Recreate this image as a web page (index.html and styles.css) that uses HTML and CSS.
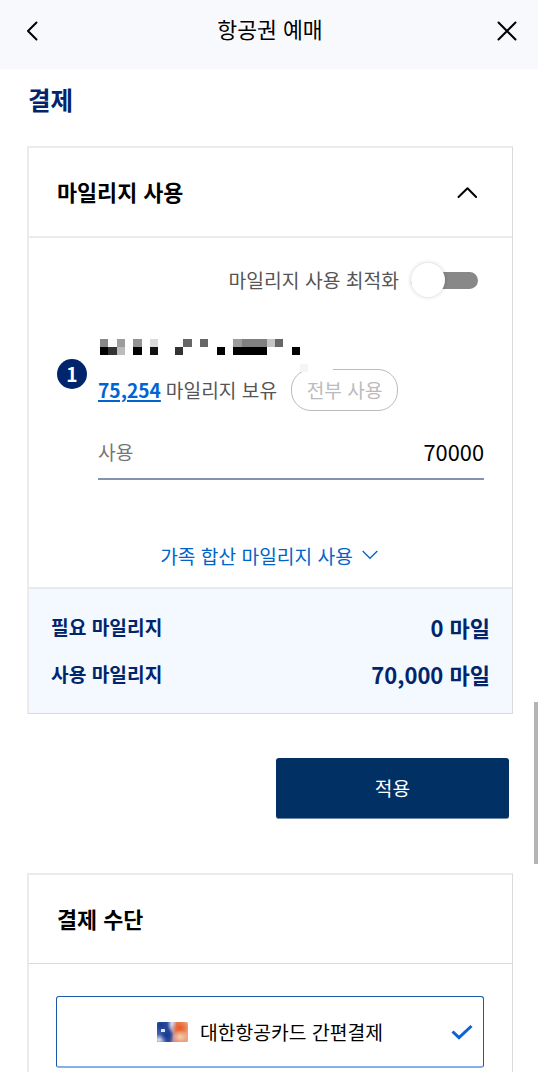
FILE: index.html
```html
<!DOCTYPE html>
<html lang="ko">
<head>
  <meta charset="UTF-8" />
  <title>항공권 예매</title>
  <meta name="viewport" content="width=device-width, initial-scale=1.0"/>
  <link rel="stylesheet" href="styles.css">
</head>
<body>

<header class="topbar">
  <svg class="icon" width="24" height="24" viewBox="0 0 24 24"><path d="M15.5 3.5 7 12l8.5 8.5"/></svg>
  <h1>항공권 예매</h1>
  <svg class="icon" width="24" height="24" viewBox="0 0 24 24"><path d="M3.5 3.5l17 17M20.5 3.5l-17 17"/></svg>
</header>

<main>
  <h2>결제</h2>

  <section class="card miles">
    <div class="card-head">
      <h3>마일리지 사용</h3>
      <svg class="icon" width="24" height="24" viewBox="0 0 24 24"><path d="M3.5 17 12.5 8.3l8.6 8.7"/></svg>
    </div>

    <div class="card-body">
      <label class="optimize">
        <span>마일리지 사용 최적화</span>
        <span class="toggle"></span>
      </label>

      <div class="member">
        <span class="num">1</span>
        <div class="member-info">
          <svg class="masked" width="200" height="16" viewBox="0 0 24 2" preserveAspectRatio="none" shape-rendering="crispEdges">
            <path fill="#888" d="M0 0h1v1h-1z"/>
            <path fill="#fafafa" d="M1 0h1v1h-1z"/>
            <path fill="#9c9c9c" d="M2 0h1v1h-1zM16 0h1v1h-1z"/>
            <path fill="#939393" d="M4 0h1v1h-1z"/>
            <path fill="#dadada" d="M6 0h1v1h-1z"/>
            <path fill="#666" d="M10 0h1v1h-1zM12 0h1v1h-1zM21 0h1v1h-1z"/>
            <path fill="#808080" d="M17 0h3v1h-3z"/>
            <path fill="#c4c4c4" d="M20 0h1v1h-1z"/>
            <path fill="#000" d="M0 1h1v1h-1zM4 1h1v1h-1zM14 1h1v1h-1zM16 1h4v1h-4zM23 1h1v1h-1z"/>
            <path fill="#333" d="M1 1h1v1h-1zM9 1h1v1h-1z"/>
            <path fill="#bbb" d="M2 1h1v1h-1z"/>
            <path fill="#111" d="M6 1h1v1h-1z"/>
          </svg>
          <div class="balance">
            <a>75,254</a>
            <span>마일리지 보유</span>
            <button class="use-all">전부 사용</button>
          </div>
        </div>
      </div>

      <div class="field">
        <span>사용</span>
        <strong>70000</strong>
      </div>

      <div class="family">
        <span>가족 합산 마일리지 사용</span>
        <svg width="16" height="10" viewBox="0 0 16 10"><path d="M.7 1 8 8.3 15.3 1"/></svg>
      </div>
    </div>

    <dl class="summary">
      <div><dt>필요 마일리지</dt><dd>0 마일</dd></div>
      <div><dt>사용 마일리지</dt><dd>70,000 마일</dd></div>
    </dl>
  </section>

  <button class="apply">적용</button>

  <section class="card payment">
    <div class="card-head">
      <h3>결제 수단</h3>
    </div>
    <div class="method">
      <svg width="31" height="20" viewBox="0 0 31 20">
        <defs>
          <linearGradient id="base">
            <stop offset="0" stop-color="#3f62ae"/>
            <stop offset=".4" stop-color="#2d4b9c"/>
            <stop offset=".54" stop-color="#c08f96"/>
            <stop offset=".66" stop-color="#ea7c50"/>
            <stop offset="1" stop-color="#e8a582"/>
          </linearGradient>
          <radialGradient id="blue">
            <stop offset="0" stop-color="#163a92"/>
            <stop offset="1" stop-color="#163a92" stop-opacity="0"/>
          </radialGradient>
          <radialGradient id="orange">
            <stop offset="0" stop-color="#ea5a25"/>
            <stop offset="1" stop-color="#ea5a25" stop-opacity="0"/>
          </radialGradient>
          <radialGradient id="pale">
            <stop offset="0" stop-color="#dde2ee"/>
            <stop offset="1" stop-color="#dde2ee" stop-opacity="0"/>
          </radialGradient>
          <radialGradient id="sand">
            <stop offset="0" stop-color="#f3d0b0"/>
            <stop offset="1" stop-color="#f3d0b0" stop-opacity="0"/>
          </radialGradient>
          <clipPath id="shape"><rect width="31" height="20" rx="1.5"/></clipPath>
        </defs>
        <g clip-path="url(#shape)">
          <rect width="31" height="20" fill="url(#base)"/>
          <ellipse cx="4" cy="3" rx="10" ry="8" fill="url(#blue)"/>
          <ellipse cx="15" cy="2" rx="5" ry="10" fill="url(#pale)"/>
          <ellipse cx="2" cy="18" rx="8" ry="6" fill="url(#pale)"/>
          <ellipse cx="10" cy="13" rx="7" ry="8" fill="url(#blue)"/>
          <ellipse cx="23" cy="6" rx="9" ry="7" fill="url(#orange)"/>
          <ellipse cx="23" cy="15" rx="8" ry="7" fill="url(#sand)"/>
        </g>
        <rect x="4" y="7" width="4" height="3" rx=".6" fill="#dfe8f5"/>
      </svg>
      <span>대한항공카드 간편결제</span>
      <svg class="check" width="22" height="16" viewBox="0 0 22 16"><path d="M1.5 7.5 8 13.7 20.5 2"/></svg>
    </div>
  </section>
</main>

<div class="scrollbar"></div>

</body>
</html>
```
FILE: styles.css
```css
* { box-sizing: border-box; }
body { margin: 0; height: 1072px; overflow: hidden; background: #fff; color: #000; font: 19.2px/28px "Noto Sans CJK KR", sans-serif; }
h1, h2, h3, dl, dd { margin: 0; }
button { font: inherit; padding: 0; }

.icon { fill: none; stroke: #000; stroke-width: 2; stroke-linecap: round; stroke-linejoin: round; }

.topbar { display: flex; justify-content: space-between; align-items: center; height: 69px; padding: 0 19px 8px 21px; background: #f8f9fd; }
.topbar h1 { padding-bottom: 3px; font-size: 21.6px; font-weight: 400; }

main { padding: 0 25px 0 27px; }
h2 { height: 77px; padding: 13px 0 0 1px; font-size: 24.5px; line-height: 36px; color: #00256c; }

.card { border: solid #ebebed; border-width: 2px 1px 1px 2px; border-right-color: #d9dadc; border-bottom-color: #d9dadc; }
.card-head { display: flex; justify-content: space-between; align-items: center; height: 90px; padding: 0 33px 0 28px; }
.card-head h3 { font-size: 21.8px; font-weight: 700; }

.miles .card-head { border-bottom: 2px solid #ebebed; }
.card-body { height: 351px; padding: 22px 28px 0; border-bottom: 2px solid #e8e9ee; }

.optimize { display: flex; justify-content: flex-end; align-items: center; gap: 12px; height: 40px; padding-right: 6px; color: #555; font-size: 19.3px; }
.toggle { position: relative; width: 67px; height: 17px; background: #888; border-radius: 9px; }
.toggle::before { content: ""; position: absolute; left: 0; top: -9px; width: 34px; height: 34px; border-radius: 50%; background: #fff; box-shadow: 0 0 4px rgba(0,0,0,0.2); }

.member { display: flex; gap: 11px; margin-top: 39px; color: #555; }
.num { width: 30px; height: 30px; margin-top: 20px; border-radius: 50%; background: #00256c; color: #fff; font-weight: 700; text-align: center; line-height: 30px; }
.masked { display: block; margin: 0 0 14px 2px; }
.balance { position: relative; display: flex; align-items: center; height: 42px; }
.balance a { margin-right: 5px; color: #0064d2; font-weight: 700; text-decoration: underline; text-decoration-thickness: 2px; text-underline-offset: 2px; }
.use-all { width: 107px; height: 42px; margin-left: 14px; border: 1px solid #bbb; border-radius: 20px; background: none; color: #bbb; }
/* masked area runs over the top of the button */
.balance::after { content: ""; position: absolute; left: 202px; top: -5px; width: 33px; height: 8px; background: linear-gradient(#f5f5f5, #f5f5f5) left / 8px 8px no-repeat #fff; }

.field { display: flex; justify-content: space-between; align-items: center; height: 54px; margin: 15px 0 0 41px; border-bottom: 2px solid #8391b2; color: #767676; }
.field strong { color: #000; font-size: 21.8px; font-weight: 400; }

.family { display: flex; justify-content: center; align-items: center; gap: 9px; margin: 62px 3px 0 0; color: #0064c8; }
.family svg { margin-top: -2px; fill: none; stroke: #0064c8; stroke-width: 1.3; }

.summary { height: 124px; padding: 14px 22px 0; background: #f4f8ff; color: #00256c; font-weight: 700; }
.summary div { display: flex; justify-content: space-between; align-items: center; height: 47px; }
.summary dd { font-size: 22px; }

.apply { display: block; width: 233px; height: 61px; margin: 44px 4px 54px auto; border: 0; border-bottom: 1px solid #6f89a8; border-radius: 3px; background: #003064; color: #fff; }

.payment { height: 220px; }
.payment .card-head { height: 89px; border-bottom: 1px solid #d9dadc; }
.method { position: relative; display: flex; justify-content: center; align-items: center; gap: 12px; height: 72px; margin: 32px 28px 0 27px; border: 1px solid #1b5aa6; border-bottom: 2px solid #83b0ea; border-radius: 3px; font-size: 19.3px; }
.check { position: absolute; right: 10px; top: 27px; fill: none; stroke: #0f62d0; stroke-width: 3; }

.scrollbar { position: fixed; right: 0; top: 702px; width: 4px; height: 162px; background: #b4b4b4; }
```
